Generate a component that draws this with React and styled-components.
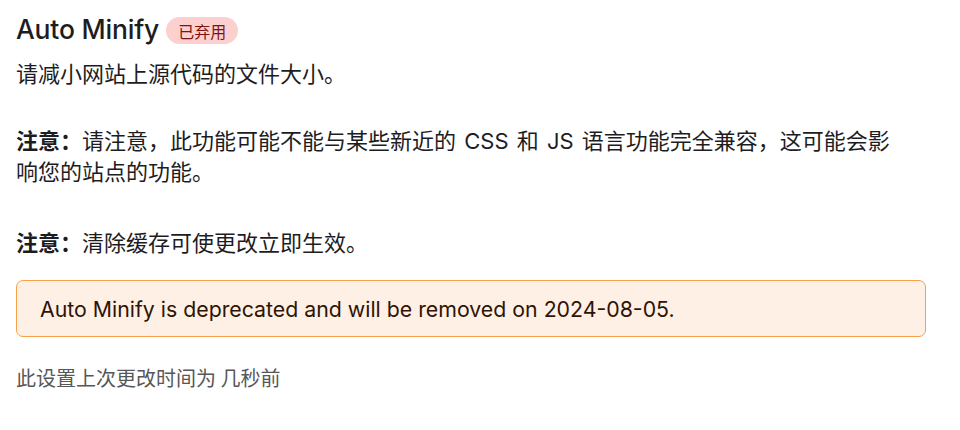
import React from "react";
import styled, { createGlobalStyle } from "styled-components";

const Global = createGlobalStyle`
  html, body { margin: 0; padding: 0; background: #ffffff; }
  body { font-family: "Inter", "Noto Sans CJK SC", sans-serif; color: #1d1d1f; }
`;

const Page = styled.div`
  padding: 11px 16px 0 16px;
  width: 910px;
`;

const TitleRow = styled.div`
  display: flex;
  align-items: center;
  gap: 7px;
  height: 36px;
`;

const Title = styled.h2`
  margin: 0;
  font-size: 26.5px;
  font-weight: 500;
  letter-spacing: -0.2px;
  color: #1d1d1f;
`;

const Badge = styled.span`
  display: inline-flex;
  align-items: center;
  height: 27px;
  padding: 0 12px;
  border-radius: 14px;
  background: #fdd0d0;
  color: #7d1414;
  font-size: 16px;
  margin-top: 3px;
`;

const Text = styled.p`
  margin: ${(p) => p.$top || 0}px 0 ${(p) => p.$gap || 0}px 0;
  max-width: ${(p) => p.$max || 910}px;
  font-size: 22px;
  line-height: 31px;
  word-spacing: 2px;
  font-family: "Inter", "Noto Sans CJK SC", sans-serif;
  color: #1d1d1f;
`;

const Strong = styled.b`
  font-weight: 700;
  word-spacing: 0;
`;

const Alert = styled.div`
  margin-top: 21px;
  height: 57px;
  box-sizing: border-box;
  display: flex;
  align-items: center;
  padding: 0 23px;
  background: #fef0e4;
  border: 1.5px solid #f7a14a;
  border-radius: 7px;
  font-size: 21.3px;
  color: #2e1405;
`;

const Footer = styled.div`
  margin-top: 26px;
  font-size: 20px;
  color: #575757;
  font-family: "Noto Sans CJK SC", sans-serif;
`;

export default function App() {
  return (
    <>
      <Global />
      <Page>
        <TitleRow>
          <Title>Auto Minify</Title>
          <Badge>已弃用</Badge>
        </TitleRow>
        <Text $top={12} $gap={36}>请减小网站上源代码的文件大小。</Text>
        <Text $gap={40} $max={893}>
          <Strong>注意：</Strong>请注意，此功能可能不能与某些新近的 CSS 和 JS 语言功能完全兼容，这可能会影响您的站点的功能。
        </Text>
        <Text>
          <Strong>注意：</Strong>清除缓存可使更改立即生效。
        </Text>
        <Alert>Auto Minify is deprecated and will be removed on 2024-08-05.</Alert>
        <Footer>此设置上次更改时间为 几秒前</Footer>
      </Page>
    </>
  );
}
